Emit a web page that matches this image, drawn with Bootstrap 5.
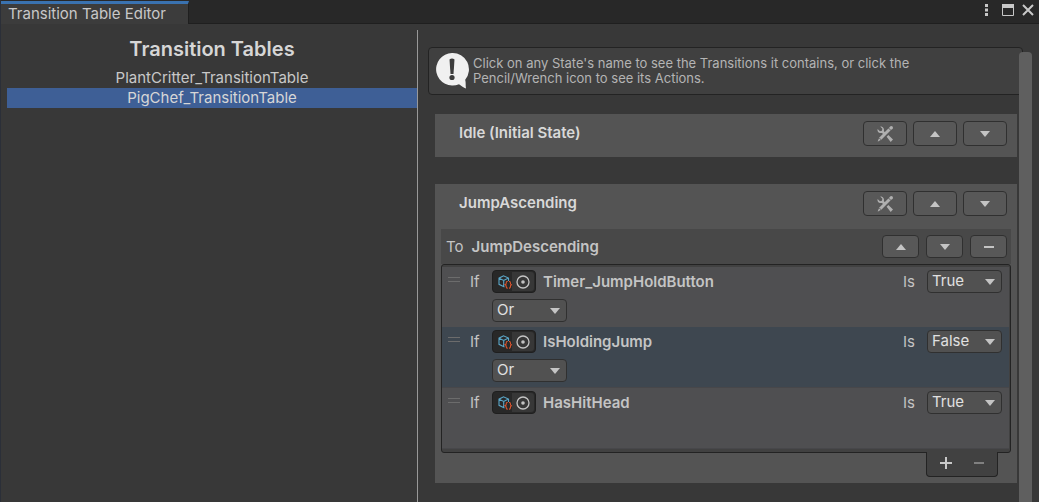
<!DOCTYPE html>
<html lang="en">
<head>
<meta charset="utf-8">
<meta name="viewport" content="width=device-width, initial-scale=1">
<title>Transition Table Editor</title>
<link href="https://cdn.jsdelivr.net/npm/bootstrap@5.3.0/dist/css/bootstrap.min.css" rel="stylesheet">
<style>
body{background:#383838;color:#c4c4c4;font:15px/20px Inter,"Liberation Sans",sans-serif;overflow:hidden}
.window{min-height:100vh;border-left:1px solid #2b2f38}
.titlebar{height:24px;background:#282828;border-bottom:1px solid #1f1f1f;padding:1px 5px 0 0}
.tab{background:#3c3c3c;border-top:3px solid #3a72b0;border-right:1px solid #1f1f1f;width:188px;height:23px;padding-left:7px;color:#c8c8c8}
.winbtn{background:none;border:0;padding:0;color:#c8c8c8;line-height:0;display:flex}
.menu{margin-right:13px}
.tables{width:416px;max-width:45%;padding:12px 0 0 6px}
.tables h1{font-size:20px;line-height:26px;font-weight:600;color:#d6d6d6;margin:0 0 6px}
.tables a{display:block;color:#c8c8c8;text-decoration:none;text-align:center;line-height:20px}
.tables a.active{background:#3e5f96;color:#d6d6d6}
.detail{border-left:1px solid #999;margin-top:6px;padding:17px 22px 0 17px;min-width:0}
.helpbox{background:#404040;border:1px solid #232323;border-radius:4px;height:48px;margin:0 -6px 19px -7px;padding:4px 6px;font-size:13px;line-height:15px;color:#b4b4b4}
.helptext{padding-top:4px;max-width:480px}
.thumb{top:22px;bottom:0;right:7px;width:13px;background:#5f5f5f;border-radius:4px 4px 0 0}
.state{background:#545454;margin-bottom:27px}
.statehead{height:43px;padding:0 10px 4px 24px}
.state h2,.line h3,.transhead h3{font-size:15px;line-height:20px;font-weight:600;margin:0;color:#d8d8d8}
.statehead h2{padding-bottom:2px}
.transhead h3,.line h3{color:#c4c4c4}
.tools{gap:6px}
.tool{background:#585858;border:1px solid #303030;border-radius:4px;width:44px;height:25px;padding:0;display:flex;align-items:center;justify-content:center;color:#c4c4c4}
.wrench{color:#b0b0b0}
.transhead .tools{gap:7px}
.transhead .tool{width:37px;height:23px}
.trans{margin:2px 6px 0}
.transhead{background:#484848;height:35px;padding:0 4px 0 5px}
.conds{border:1px solid #232323;border-radius:3px;background:#414141;padding:2px 1px 3px 0}
.cond{background:#4f4f51;height:61px;padding:3px 7px 0 5px;border-bottom:1px solid #47474a}
.cond:first-child{height:60px;border-bottom:0}
.cond.picked{background:#3e4750}
.line{height:23px;margin-bottom:6px}
.grip{width:12px;height:5px;border:solid #6c6c6c;border-width:1px 0;margin:0 10px 5px 1px}
.word{width:22px;color:#c4c4c4}
.objfield{width:44px;height:23px;background:#282828;border:1px solid #1f1f1f;border-radius:4px;margin-right:7px;padding:1px 1px 1px 5px}
.pick{background:#373737;border:0;border-radius:0 3px 3px 0;width:22px;height:19px;padding:0;display:flex;align-items:center;justify-content:center;color:#c4c4c4}
.drop{appearance:none;width:75px;height:23px;border:1px solid #303030;border-radius:4px;padding:0 4px 2px;color:#e0e0e0;line-height:20px;background:#515151 url("data:image/svg+xml,%3Csvg xmlns='http://www.w3.org/2000/svg' width='10' height='6'%3E%3Cpath d='M0 0h10L5 6z' fill='%23c4c4c4'/%3E%3C/svg%3E") no-repeat right 6px center}
.joiner{margin-left:45px}
.foot{width:72px;height:25px;margin:-1px 13px 0 auto;background:#414141;border:1px solid #232323;border-top:0;border-radius:0 0 4px 4px;position:relative;padding:0 2px 3px}
.tail{height:6px}
.foot button{background:none;border:0;padding:0;color:#c8c8c8;display:flex}
.foot button:disabled{color:#808080}
</style>
</head>
<body>
<svg class="d-none" aria-hidden="true">
  <symbol id="up" viewBox="0 0 10 6"><path d="M0 6h10L5 0z" fill="currentColor"/></symbol>
  <symbol id="down" viewBox="0 0 10 6"><path d="M0 0h10L5 6z" fill="currentColor"/></symbol>
  <symbol id="minus" viewBox="0 0 12 12"><path d="M1 5h10v2H1z" fill="currentColor"/></symbol>
  <symbol id="plus" viewBox="0 0 12 12"><path d="M0 5h5V0h2v5h5v2H7v5H5V7H0z" fill="currentColor"/></symbol>
  <symbol id="wrench" viewBox="0 0 16 16">
    <path d="M3.200.5 5.400 2.700 4.900 4.700 2.900 5.200.6 3C0 5 1.300 7 3.400 7.100L5 6.900 6.500 8.400 8.300 6.600 6.900 5.200C7.500 2.500 5.800.2 3.200.5zM9.600 10.800 11.400 9 16 13.600 13.700 16z" fill="currentColor"/>
    <path d="M12.600 1.200 14.700 3.300 4.600 13.600 1 15.500.7 15.200 2.400 11.500z" fill="currentColor"/>
    <circle cx="14.300" cy="1.800" r="1.700" fill="currentColor"/>
    <path d="m11.500 2 2.500 2.500M2.300 12l1.900 1.900" stroke="#585858" stroke-width=".9"/>
  </symbol>
  <symbol id="target" viewBox="0 0 14 14"><circle cx="7" cy="7" r="6" fill="none" stroke="currentColor" stroke-width="1.300"/><circle cx="7" cy="7" r="1.800" fill="currentColor"/></symbol>
  <symbol id="asset" viewBox="0 0 14 14">
    <path d="M6.500 12 1 9.300V3.200L5.500.8 10.500 3v3M1 3.200l4.700 2.300L10.500 3M5.700 5.500V12" fill="none" stroke="#5aa6c8" stroke-width="1.100"/>
    <path d="M9.700 6.500H9c-.8 0-.8.500-.8 1.500s0 1.500-1 1.800c1 .3 1 .8 1 1.800s0 1.500.8 1.500h.7M11 6.500h.6c.8 0 .8.500.8 1.500s0 1.500 1 1.800c-1 .3-1 .8-1 1.800s0 1.500-.8 1.500H11" fill="none" stroke="#e0562f" stroke-width="1.100"/>
  </symbol>
</svg>

<div class="window d-flex flex-column">
  <header class="titlebar d-flex justify-content-between">
    <div class="tab">Transition Table Editor</div>
    <div class="d-flex align-items-center pb-1">
      <button class="winbtn menu" aria-label="Menu"><svg width="4" height="12" fill="currentColor"><path d="M0 0h3v3H0zM0 4.500h3v3H0zM0 9h3v3H0z"/></svg></button>
      <button class="winbtn me-2" aria-label="Maximize"><svg width="12" height="12" fill="none" stroke="currentColor"><path d="M.5.5h11v11H.5z"/><path d="M0 2h12" stroke-width="4"/></svg></button>
      <button class="winbtn" aria-label="Close"><svg width="12" height="12" stroke="currentColor" stroke-width="2"><path d="m1 1 10 10M11 1 1 11"/></svg></button>
    </div>
  </header>

  <div class="d-flex flex-grow-1">
    <nav class="tables flex-shrink-0">
      <h1 class="text-center">Transition Tables</h1>
      <a href="#">PlantCritter_TransitionTable</a>
      <a href="#" class="active" aria-current="page">PigChef_TransitionTable</a>
    </nav>

    <main class="detail flex-grow-1 position-relative">
      <div class="helpbox d-flex gap-1">
        <svg class="flex-shrink-0" width="34" height="38" viewBox="0 0 34 38"><path d="M17 1a16.300 16.300 0 1 0 7 31.200c2.500 1.700 4.600 3.300 7 4.300-.6-3 0-6-.8-8.800A16.300 16.300 0 0 0 17 1z" fill="#f0f0f0"/><path d="M14.500 7.500q2.500-1.800 5 0l-1 14.500h-3z" fill="#3c3c3c"/><circle cx="17" cy="25.500" r="2.600" fill="#3c3c3c"/></svg>
        <div class="helptext">Click on any State's name to see the Transitions it contains, or click the Pencil/Wrench icon to see its Actions.</div>
      </div>

      <section class="state">
        <div class="statehead d-flex align-items-center">
          <h2 class="me-auto">Idle (Initial State)</h2>
          <div class="tools d-flex">
            <button class="tool wrench" aria-label="Edit actions"><svg width="16" height="16"><use href="#wrench"/></svg></button>
            <button class="tool" aria-label="Move up"><svg width="10" height="6"><use href="#up"/></svg></button>
            <button class="tool" aria-label="Move down"><svg width="10" height="6"><use href="#down"/></svg></button>
          </div>
        </div>
      </section>

      <section class="state">
        <div class="statehead d-flex align-items-center">
          <h2 class="me-auto">JumpAscending</h2>
          <div class="tools d-flex">
            <button class="tool wrench" aria-label="Edit actions"><svg width="16" height="16"><use href="#wrench"/></svg></button>
            <button class="tool" aria-label="Move up"><svg width="10" height="6"><use href="#up"/></svg></button>
            <button class="tool" aria-label="Move down"><svg width="10" height="6"><use href="#down"/></svg></button>
          </div>
        </div>
        <div class="trans">
          <div class="transhead d-flex align-items-center">
            <span class="me-2">To</span><h3 class="me-auto">JumpDescending</h3>
            <div class="tools d-flex">
              <button class="tool" aria-label="Move up"><svg width="10" height="6"><use href="#up"/></svg></button>
              <button class="tool" aria-label="Move down"><svg width="10" height="6"><use href="#down"/></svg></button>
              <button class="tool" aria-label="Remove transition"><svg width="12" height="12"><use href="#minus"/></svg></button>
            </div>
          </div>
          <div class="conds">
            <div class="cond">
              <div class="line d-flex align-items-center">
                <span class="grip"></span><span class="word">If</span>
                <span class="objfield d-flex align-items-center justify-content-between"><svg width="14" height="14"><use href="#asset"/></svg><button class="pick" aria-label="Select condition"><svg width="14" height="14"><use href="#target"/></svg></button></span>
                <h3 class="me-auto">Timer_JumpHoldButton</h3>
                <label class="me-2 pe-1" for="is1">Is</label>
                <select class="drop" id="is1"><option>True</option><option>False</option></select>
              </div>
              <select class="drop d-block joiner" aria-label="Operator"><option>Or</option><option>And</option></select>
            </div>
            <div class="cond picked">
              <div class="line d-flex align-items-center">
                <span class="grip"></span><span class="word">If</span>
                <span class="objfield d-flex align-items-center justify-content-between"><svg width="14" height="14"><use href="#asset"/></svg><button class="pick" aria-label="Select condition"><svg width="14" height="14"><use href="#target"/></svg></button></span>
                <h3 class="me-auto">IsHoldingJump</h3>
                <label class="me-2 pe-1" for="is2">Is</label>
                <select class="drop" id="is2"><option>True</option><option selected>False</option></select>
              </div>
              <select class="drop d-block joiner" aria-label="Operator"><option>Or</option><option>And</option></select>
            </div>
            <div class="cond">
              <div class="line d-flex align-items-center">
                <span class="grip"></span><span class="word">If</span>
                <span class="objfield d-flex align-items-center justify-content-between"><svg width="14" height="14"><use href="#asset"/></svg><button class="pick" aria-label="Select condition"><svg width="14" height="14"><use href="#target"/></svg></button></span>
                <h3 class="me-auto">HasHitHead</h3>
                <label class="me-2 pe-1" for="is3">Is</label>
                <select class="drop" id="is3"><option>True</option><option>False</option></select>
              </div>
            </div>
          </div>
          <div class="foot d-flex align-items-center justify-content-around">
            <button aria-label="Add condition"><svg width="12" height="12"><use href="#plus"/></svg></button>
            <button aria-label="Remove condition" disabled><svg width="12" height="12"><use href="#minus"/></svg></button>
          </div>
          <div class="tail"></div>
        </div>
      </section>
      <div class="thumb position-absolute"></div>
    </main>
  </div>
</div>
<script src="https://cdn.jsdelivr.net/npm/bootstrap@5.3.0/dist/js/bootstrap.bundle.min.js"></script>
</body>
</html>
